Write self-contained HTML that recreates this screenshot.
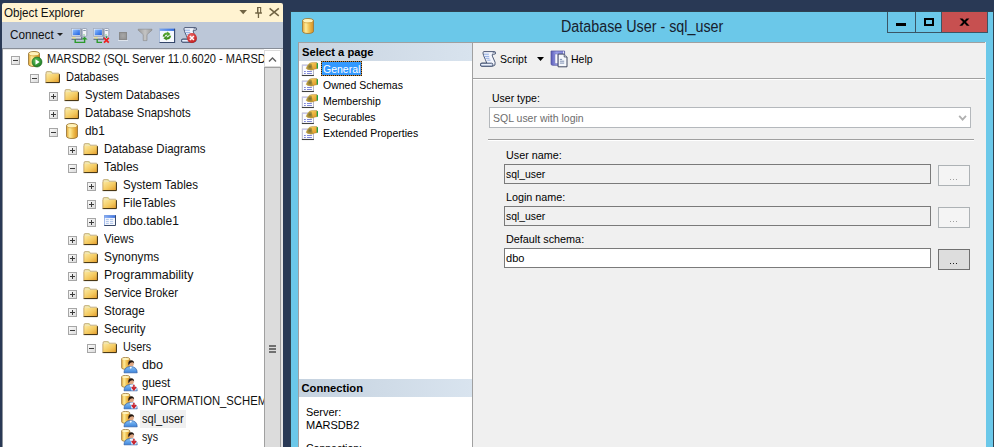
<!DOCTYPE html>
<html><head><meta charset="utf-8">
<style>
html,body{margin:0;padding:0;}
body{width:994px;height:447px;overflow:hidden;position:relative;background:#293955;font-family:"Liberation Sans",sans-serif;}
.a{position:absolute;}
.t{position:absolute;white-space:nowrap;line-height:1;}
.exp{position:absolute;width:7px;height:7px;border:1px solid #a6a6a6;background:linear-gradient(135deg,#fafafa,#dcdcdc);}
.exp:before{content:"";position:absolute;left:1px;top:3px;width:5px;height:1px;background:#3a3a3a;}
.exp.p:after{content:"";position:absolute;left:3px;top:1px;width:1px;height:5px;background:#3a3a3a;}
</style></head><body>
<svg width="0" height="0" style="position:absolute"><defs><linearGradient id="gFold" x1="0" y1="0" x2="1" y2="1">
  <stop offset="0" stop-color="#fbe9a0"/><stop offset="0.55" stop-color="#f4c95e"/><stop offset="1" stop-color="#e29a2a"/>
 </linearGradient><linearGradient id="gCyl" x1="0" y1="0" x2="1" y2="0">
  <stop offset="0" stop-color="#e3a434"/><stop offset="0.3" stop-color="#fdec9a"/><stop offset="0.62" stop-color="#f0c050"/><stop offset="1" stop-color="#d68e22"/>
 </linearGradient><radialGradient id="gGreen" cx="0.4" cy="0.35" r="0.7">
  <stop offset="0" stop-color="#5fc35a"/><stop offset="1" stop-color="#1b7a22"/>
 </radialGradient><linearGradient id="gScreen" x1="0" y1="0" x2="1" y2="1">
  <stop offset="0" stop-color="#8fc0ff"/><stop offset="1" stop-color="#1c5fe0"/>
 </linearGradient><linearGradient id="gBlueShirt" x1="0" y1="0" x2="0" y2="1">
  <stop offset="0" stop-color="#8cc4f6"/><stop offset="1" stop-color="#3c84dc"/>
 </linearGradient><radialGradient id="gRed" cx="0.4" cy="0.35" r="0.7">
  <stop offset="0" stop-color="#f07070"/><stop offset="1" stop-color="#c01818"/>
 </radialGradient><linearGradient id="gTHead" x1="0" y1="0" x2="1" y2="0"><stop offset="0" stop-color="#8ab0f4"/><stop offset="1" stop-color="#3a70e0"/></linearGradient><linearGradient id="gFil" x1="0" y1="0" x2="1" y2="0"><stop offset="0" stop-color="#9a9a9a"/><stop offset="0.5" stop-color="#c4c4c4"/><stop offset="1" stop-color="#9a9a9a"/></linearGradient><linearGradient id="gTitle" x1="0" y1="0" x2="1" y2="0"><stop offset="0" stop-color="#7aa6ee"/><stop offset="1" stop-color="#2f6ae0"/></linearGradient><linearGradient id="gArr" x1="0" y1="0" x2="0" y2="1"><stop offset="0" stop-color="#58a830"/><stop offset="1" stop-color="#3a8a18"/></linearGradient><linearGradient id="gBook" x1="0" y1="0" x2="1" y2="0"><stop offset="0" stop-color="#5a5cb8"/><stop offset="0.4" stop-color="#9a9ee8"/><stop offset="1" stop-color="#7c80d4"/></linearGradient><pattern id="pChk" width="1.6" height="1.6" patternUnits="userSpaceOnUse" patternTransform="rotate(40)"><rect width="1.6" height="1.6" fill="#e8c040"/><rect width="0.8" height="0.8" fill="#5a5a30"/><rect x="0.8" y="0.8" width="0.8" height="0.8" fill="#5a5a30"/></pattern><linearGradient id="gHand" x1="0" y1="0" x2="1" y2="1"><stop offset="0" stop-color="#fde070"/><stop offset="1" stop-color="#e0901c"/></linearGradient></defs></svg>

<div class="a" style="left:2px;top:3px;width:281px;height:19px;background:#fff3d1;border-radius:2px 2px 0 0;"></div>
<div class="a" style="left:2px;top:22px;width:281px;height:26px;background:#bcc7d8;"></div>
<div class="a" style="left:2px;top:48px;width:281px;height:1px;background:#888e98;"></div>
<div class="a" style="left:2px;top:49px;width:1px;height:398px;background:#8e949c;"></div>
<div class="a" style="left:3px;top:49px;width:280px;height:398px;background:#fff;"></div>
<div class="a" style="left:3px;top:49px;width:280px;height:1px;background:#e8e8e8;"></div>
<div class="t" style="left:4.4px;top:6.77px;font-size:12.2px;color:#111;font-weight:normal;transform:scaleX(0.955);transform-origin:0 0;">Object Explorer</div>
<div class="t" style="left:9.7px;top:29.09px;font-size:12.3px;color:#111;font-weight:normal;transform:scaleX(0.955);transform-origin:0 0;">Connect</div>
<svg class="a" style="left:230px;top:4px" width="53" height="18" viewBox="230 4 53 18"><path d="M239.4 10h7.6l-3.8 4.2z" fill="#716444"/><path d="M257 7h4.2v6h-1.1v-5h-1.6v5h-1.5z M255.2 12.3h6.7v1.4h-6.7z M257.8 13.5h1.3v4.5h-1.3z" fill="#716444"/><path d="M269.6 8.3l9.2 7.6M278.8 8.3l-9.2 7.6" stroke="#716444" stroke-width="1.5"/></svg>
<svg class="a" style="left:56.3px;top:32px" width="8" height="5"><path d="M1 1h6l-3 3z" fill="#1e1e1e"/></svg>
<svg class="a" style="left:71px;top:28px" width="17" height="16" viewBox="0 0 17 16">
  <svg width="17" height="16" viewBox="0 0 17 16">
  <rect x="0.5" y="0.5" width="9.5" height="7.8" fill="#eef1f6" stroke="#a4aec0" stroke-width="0.8"/>
  <path d="M10 0.8 V8.3 H0.8" fill="none" stroke="#56627a" stroke-width="0.7"/>
  <rect x="1.6" y="1.5" width="7.3" height="5.6" fill="url(#gScreen)"/>
  <path d="M0.3 8.4 H10.5 L10.8 11.3 H0.3Z" fill="#d4dae4"/>
  <path d="M0.5 11.2 H10.8 V8.6" fill="none" stroke="#3c4860" stroke-width="0.9"/>
  <rect x="1.2" y="9.2" width="3.4" height="1.2" fill="#efe27a"/>
  <rect x="11.2" y="0.5" width="4.6" height="7.8" rx="1" fill="#f2f4f8" stroke="#8a96aa" stroke-width="0.8"/>
  <rect x="12.2" y="2" width="2.6" height="0.9" fill="#7d8ca4"/>
  <rect x="12.5" y="6.4" width="1" height="1" fill="#3ab03a"/>
 </svg>
  <path d="M4.2 11.3 V14.4 H13.6 V10.5" fill="none" stroke="#2b9a2b" stroke-width="1.4"/>
  <path d="M10.3 11.6 L13.6 8.8 L16.6 11.6Z" fill="#2b9a2b"/>
 </svg>
<svg class="a" style="left:93px;top:28px" width="17" height="16" viewBox="0 0 17 16">
  <svg width="17" height="16" viewBox="0 0 17 16">
  <rect x="0.5" y="0.5" width="9.5" height="7.8" fill="#eef1f6" stroke="#a4aec0" stroke-width="0.8"/>
  <path d="M10 0.8 V8.3 H0.8" fill="none" stroke="#56627a" stroke-width="0.7"/>
  <rect x="1.6" y="1.5" width="7.3" height="5.6" fill="url(#gScreen)"/>
  <path d="M0.3 8.4 H10.5 L10.8 11.3 H0.3Z" fill="#d4dae4"/>
  <path d="M0.5 11.2 H10.8 V8.6" fill="none" stroke="#3c4860" stroke-width="0.9"/>
  <rect x="1.2" y="9.2" width="3.4" height="1.2" fill="#efe27a"/>
  <rect x="11.2" y="0.5" width="4.6" height="7.8" rx="1" fill="#f2f4f8" stroke="#8a96aa" stroke-width="0.8"/>
  <rect x="12.2" y="2" width="2.6" height="0.9" fill="#7d8ca4"/>
  <rect x="12.5" y="6.4" width="1" height="1" fill="#3ab03a"/>
 </svg>
  <path d="M4.2 11.3 V14.4 H9" fill="none" stroke="#2b9a2b" stroke-width="1.4"/>
  <path d="M13.5 8.4 V10" stroke="#2b9a2b" stroke-width="1"/>
  <path d="M11 9.8 L15.8 14.6 M15.8 9.8 L11 14.6" stroke="#ee2020" stroke-width="1.8"/>
 </svg>
<div class="a" style="left:119px;top:32px;width:8px;height:8px;background:radial-gradient(circle at 50% 45%,#a8a8a8,#8a8a8a);box-shadow:inset 0 0 0 1px #8a8a8a;"></div>
<div class="a" style="left:118px;top:40px;width:10px;height:1px;background:#dde3ec;"></div>
<svg class="a" style="left:137px;top:28px" width="16" height="16" viewBox="0 0 16 16">
  
  <path d="M1.2 1.2 H15 V2.2 L10 6.6 V12.6 H6.2 V6.6 L1.2 2.2 Z" fill="url(#gFil)" stroke="#888" stroke-width="0.6"/>
 </svg>
<svg class="a" style="left:159px;top:28px" width="17" height="16" viewBox="0 0 17 16">
  
  
  <rect x="0.5" y="0.3" width="15.2" height="14.2" fill="#f6f9fe"/>
  <rect x="0.5" y="0.3" width="15.2" height="2.6" fill="url(#gTitle)"/>
  <path d="M0.5 14.6 V0.3 H15.7" fill="none" stroke="#a0b4d4" stroke-width="0.8"/>
  <path d="M0.5 14.5 H15.6 V0.8" fill="none" stroke="#34466a" stroke-width="1.1"/>
  <path d="M4.6 8.6 Q5.2 5.4 8.6 5.6" fill="none" stroke="url(#gArr)" stroke-width="2"/>
  <path d="M8.2 3.6 L11.4 6 L8.2 8.6Z" fill="#4a9c24"/>
  <path d="M11.2 7.6 Q10.8 10.6 7.4 10.4" fill="none" stroke="url(#gArr)" stroke-width="2"/>
  <path d="M7.8 7.6 L4.4 10.2 L7.8 12.6Z" fill="#3f8f1c"/>
 </svg>
<svg class="a" style="left:181px;top:27px" width="17" height="17" viewBox="0 0 17 17">
  <svg width="16" height="16" viewBox="0 0 16 16">
  <path d="M3.6 0.6 H14 Q15.8 0.6 15.8 1.9 Q15.8 3.2 14 3.2 H12.6 Q11.9 3.6 12.4 5.2 L15.1 11.3 Q15.9 14.9 12.8 15.2 H1.9 Q0.4 15.2 0.4 13.7 Q0.4 12.2 1.9 12.2 H6.8 Q5.6 9 3.6 4.6 Q2.3 1.2 3.6 0.6 Z" fill="#f2f5fc" stroke="#3a4868" stroke-width="0.9"/>
  <path d="M4 3.2h4.9M4.3 5.4h4.9M5.4 7.3h4M7.3 9.2h3.2" stroke="#86a4e0" stroke-width="0.9"/>
  <path d="M1.9 12.2 H11.6 Q12.9 12.2 12.9 13.7 Q12.9 15.2 11.6 15.2 H1.9 Q0.4 15.2 0.4 13.7 Q0.4 12.2 1.9 12.2Z" fill="#d0dbf0" stroke="#3a4868" stroke-width="0.9"/>
  <path d="M2 13.6 H11" stroke="#f4f7ff" stroke-width="0.8"/>
  <path d="M12.5 2 Q13.5 1 14.6 1.6" fill="none" stroke="#3a4868" stroke-width="0.7"/>
 </svg>
  <circle cx="10.9" cy="11" r="4.9" fill="url(#gRed)"/>
  <path d="M8.9 9 L12.9 13 M12.9 9 L8.9 13" stroke="#fff" stroke-width="1.5"/>
 </svg>
<div class="a" style="left:3px;top:49px;width:261px;height:398px;overflow:hidden;">
<div class="exp" style="left:8px;top:7px"></div>
<svg class="a" style="left:25px;top:2px" width="16" height="17" viewBox="0 0 16 17">
  <svg x="0" y="0" width="12" height="16" viewBox="0 0 12 16">
  <path d="M0.5 2.6 A5.5 2.1 0 0 1 11.5 2.6 V13.4 A5.5 2.1 0 0 1 0.5 13.4 Z" fill="url(#gCyl)" stroke="#9c7a3c" stroke-width="0.9"/>
  <ellipse cx="6" cy="2.7" rx="4.9" ry="1.6" fill="#fff3bc"/>
  <path d="M1 3.2 A5 1.8 0 0 0 11 3.2" fill="none" stroke="#c89a40" stroke-width="0.6"/>
 </svg>
  <circle cx="9" cy="11" r="5" fill="url(#gGreen)" stroke="#16631b" stroke-width="0.6"/>
  <path d="M7.5 8.3 L11.6 11 L7.5 13.7 Z" fill="#fff"/>
 </svg>
<div class="t" style="left:44px;top:4.53px;font-size:11.9px;color:#111;font-weight:normal;transform:scaleX(0.93);transform-origin:0 0;">MARSDB2 (SQL Server 11.0.6020 - MARSDB2\sql_user)</div>
<div class="exp" style="left:27px;top:25px"></div>
<svg class="a" style="left:42px;top:22px" width="16" height="13" viewBox="0 0 16 13">
  <path d="M1 2 Q1 0.6 2 0.6 H5.8 Q6.6 0.6 6.8 1.6 L7 2.2 H13.4 Q14 2.2 14 3 V11.5 H1 Z" fill="#f3e6b0" stroke="#b8a070" stroke-width="0.8"/>
  <path d="M5.2 1.1 H6.5" stroke="#c8e070" stroke-width="0.8"/>
  <rect x="1" y="3" width="13.2" height="8.6" fill="url(#gFold)"/>
  <path d="M0.6 11.6 H14.4 V3.2" fill="none" stroke="#3a2c10" stroke-width="1"/>
  <path d="M1 11.5 V3" fill="none" stroke="#caa860" stroke-width="0.7"/>
 </svg>
<div class="t" style="left:63px;top:22.53px;font-size:11.9px;color:#111;font-weight:normal;transform:scaleX(0.929);transform-origin:0 0;">Databases</div>
<div class="exp p" style="left:46px;top:43px"></div>
<svg class="a" style="left:61px;top:40px" width="16" height="13" viewBox="0 0 16 13">
  <path d="M1 2 Q1 0.6 2 0.6 H5.8 Q6.6 0.6 6.8 1.6 L7 2.2 H13.4 Q14 2.2 14 3 V11.5 H1 Z" fill="#f3e6b0" stroke="#b8a070" stroke-width="0.8"/>
  <path d="M5.2 1.1 H6.5" stroke="#c8e070" stroke-width="0.8"/>
  <rect x="1" y="3" width="13.2" height="8.6" fill="url(#gFold)"/>
  <path d="M0.6 11.6 H14.4 V3.2" fill="none" stroke="#3a2c10" stroke-width="1"/>
  <path d="M1 11.5 V3" fill="none" stroke="#caa860" stroke-width="0.7"/>
 </svg>
<div class="t" style="left:82px;top:40.53px;font-size:11.9px;color:#111;font-weight:normal;transform:scaleX(0.948);transform-origin:0 0;">System Databases</div>
<div class="exp p" style="left:46px;top:61px"></div>
<svg class="a" style="left:61px;top:58px" width="16" height="13" viewBox="0 0 16 13">
  <path d="M1 2 Q1 0.6 2 0.6 H5.8 Q6.6 0.6 6.8 1.6 L7 2.2 H13.4 Q14 2.2 14 3 V11.5 H1 Z" fill="#f3e6b0" stroke="#b8a070" stroke-width="0.8"/>
  <path d="M5.2 1.1 H6.5" stroke="#c8e070" stroke-width="0.8"/>
  <rect x="1" y="3" width="13.2" height="8.6" fill="url(#gFold)"/>
  <path d="M0.6 11.6 H14.4 V3.2" fill="none" stroke="#3a2c10" stroke-width="1"/>
  <path d="M1 11.5 V3" fill="none" stroke="#caa860" stroke-width="0.7"/>
 </svg>
<div class="t" style="left:82px;top:58.53px;font-size:11.9px;color:#111;font-weight:normal;transform:scaleX(0.9565);transform-origin:0 0;">Database Snapshots</div>
<div class="exp" style="left:46px;top:79px"></div>
<svg class="a" style="left:63px;top:74px" width="16" height="17" viewBox="0 0 16 17">
  <svg x="0" y="0" width="12" height="16" viewBox="0 0 12 16">
  <path d="M0.5 2.6 A5.5 2.1 0 0 1 11.5 2.6 V13.4 A5.5 2.1 0 0 1 0.5 13.4 Z" fill="url(#gCyl)" stroke="#9c7a3c" stroke-width="0.9"/>
  <ellipse cx="6" cy="2.7" rx="4.9" ry="1.6" fill="#fff3bc"/>
  <path d="M1 3.2 A5 1.8 0 0 0 11 3.2" fill="none" stroke="#c89a40" stroke-width="0.6"/>
 </svg>
 </svg>
<div class="t" style="left:82px;top:76.53px;font-size:11.9px;color:#111;font-weight:normal;transform:scaleX(0.9954);transform-origin:0 0;">db1</div>
<div class="exp p" style="left:65px;top:97px"></div>
<svg class="a" style="left:80px;top:94px" width="16" height="13" viewBox="0 0 16 13">
  <path d="M1 2 Q1 0.6 2 0.6 H5.8 Q6.6 0.6 6.8 1.6 L7 2.2 H13.4 Q14 2.2 14 3 V11.5 H1 Z" fill="#f3e6b0" stroke="#b8a070" stroke-width="0.8"/>
  <path d="M5.2 1.1 H6.5" stroke="#c8e070" stroke-width="0.8"/>
  <rect x="1" y="3" width="13.2" height="8.6" fill="url(#gFold)"/>
  <path d="M0.6 11.6 H14.4 V3.2" fill="none" stroke="#3a2c10" stroke-width="1"/>
  <path d="M1 11.5 V3" fill="none" stroke="#caa860" stroke-width="0.7"/>
 </svg>
<div class="t" style="left:101px;top:94.53px;font-size:11.9px;color:#111;font-weight:normal;transform:scaleX(0.966);transform-origin:0 0;">Database Diagrams</div>
<div class="exp" style="left:65px;top:115px"></div>
<svg class="a" style="left:80px;top:112px" width="16" height="13" viewBox="0 0 16 13">
  <path d="M1 2 Q1 0.6 2 0.6 H5.8 Q6.6 0.6 6.8 1.6 L7 2.2 H13.4 Q14 2.2 14 3 V11.5 H1 Z" fill="#f3e6b0" stroke="#b8a070" stroke-width="0.8"/>
  <path d="M5.2 1.1 H6.5" stroke="#c8e070" stroke-width="0.8"/>
  <rect x="1" y="3" width="13.2" height="8.6" fill="url(#gFold)"/>
  <path d="M0.6 11.6 H14.4 V3.2" fill="none" stroke="#3a2c10" stroke-width="1"/>
  <path d="M1 11.5 V3" fill="none" stroke="#caa860" stroke-width="0.7"/>
 </svg>
<div class="t" style="left:101px;top:112.53px;font-size:11.9px;color:#111;font-weight:normal;transform:scaleX(1.0049);transform-origin:0 0;">Tables</div>
<div class="exp p" style="left:84px;top:133px"></div>
<svg class="a" style="left:99px;top:130px" width="16" height="13" viewBox="0 0 16 13">
  <path d="M1 2 Q1 0.6 2 0.6 H5.8 Q6.6 0.6 6.8 1.6 L7 2.2 H13.4 Q14 2.2 14 3 V11.5 H1 Z" fill="#f3e6b0" stroke="#b8a070" stroke-width="0.8"/>
  <path d="M5.2 1.1 H6.5" stroke="#c8e070" stroke-width="0.8"/>
  <rect x="1" y="3" width="13.2" height="8.6" fill="url(#gFold)"/>
  <path d="M0.6 11.6 H14.4 V3.2" fill="none" stroke="#3a2c10" stroke-width="1"/>
  <path d="M1 11.5 V3" fill="none" stroke="#caa860" stroke-width="0.7"/>
 </svg>
<div class="t" style="left:120px;top:130.53px;font-size:11.9px;color:#111;font-weight:normal;transform:scaleX(0.9717);transform-origin:0 0;">System Tables</div>
<div class="exp p" style="left:84px;top:151px"></div>
<svg class="a" style="left:99px;top:148px" width="16" height="13" viewBox="0 0 16 13">
  <path d="M1 2 Q1 0.6 2 0.6 H5.8 Q6.6 0.6 6.8 1.6 L7 2.2 H13.4 Q14 2.2 14 3 V11.5 H1 Z" fill="#f3e6b0" stroke="#b8a070" stroke-width="0.8"/>
  <path d="M5.2 1.1 H6.5" stroke="#c8e070" stroke-width="0.8"/>
  <rect x="1" y="3" width="13.2" height="8.6" fill="url(#gFold)"/>
  <path d="M0.6 11.6 H14.4 V3.2" fill="none" stroke="#3a2c10" stroke-width="1"/>
  <path d="M1 11.5 V3" fill="none" stroke="#caa860" stroke-width="0.7"/>
 </svg>
<div class="t" style="left:120px;top:148.53px;font-size:11.9px;color:#111;font-weight:normal;transform:scaleX(0.9802);transform-origin:0 0;">FileTables</div>
<div class="exp p" style="left:84px;top:169px"></div>
<svg class="a" style="left:101px;top:166px" width="16" height="16" viewBox="0 0 16 16">
  
  <rect x="0.2" y="0" width="11.8" height="11" fill="#f4f7fd"/>
  <rect x="0.2" y="0" width="11.8" height="2.9" fill="url(#gTHead)"/>
  <path d="M0.5 11 V0.3 H11.8" fill="none" stroke="#7a9ce0" stroke-width="0.7"/>
  <path d="M0.3 10.5 H11.5 V0.4" fill="none" stroke="#3a4a6a" stroke-width="1"/>
  <path d="M1.9 4.4h2.9M6 4.4h3.1M1.9 6.4h2.9M6 6.4h3.1M1.9 8.4h2.9M6 8.4h3.1" stroke="#a4bce6" stroke-width="0.9"/>
 </svg>
<div class="t" style="left:120px;top:166.53px;font-size:11.9px;color:#111;font-weight:normal;transform:scaleX(1.0049);transform-origin:0 0;">dbo.table1</div>
<div class="exp p" style="left:65px;top:187px"></div>
<svg class="a" style="left:80px;top:184px" width="16" height="13" viewBox="0 0 16 13">
  <path d="M1 2 Q1 0.6 2 0.6 H5.8 Q6.6 0.6 6.8 1.6 L7 2.2 H13.4 Q14 2.2 14 3 V11.5 H1 Z" fill="#f3e6b0" stroke="#b8a070" stroke-width="0.8"/>
  <path d="M5.2 1.1 H6.5" stroke="#c8e070" stroke-width="0.8"/>
  <rect x="1" y="3" width="13.2" height="8.6" fill="url(#gFold)"/>
  <path d="M0.6 11.6 H14.4 V3.2" fill="none" stroke="#3a2c10" stroke-width="1"/>
  <path d="M1 11.5 V3" fill="none" stroke="#caa860" stroke-width="0.7"/>
 </svg>
<div class="t" style="left:101px;top:184.53px;font-size:11.9px;color:#111;font-weight:normal;transform:scaleX(0.948);transform-origin:0 0;">Views</div>
<div class="exp p" style="left:65px;top:205px"></div>
<svg class="a" style="left:80px;top:202px" width="16" height="13" viewBox="0 0 16 13">
  <path d="M1 2 Q1 0.6 2 0.6 H5.8 Q6.6 0.6 6.8 1.6 L7 2.2 H13.4 Q14 2.2 14 3 V11.5 H1 Z" fill="#f3e6b0" stroke="#b8a070" stroke-width="0.8"/>
  <path d="M5.2 1.1 H6.5" stroke="#c8e070" stroke-width="0.8"/>
  <rect x="1" y="3" width="13.2" height="8.6" fill="url(#gFold)"/>
  <path d="M0.6 11.6 H14.4 V3.2" fill="none" stroke="#3a2c10" stroke-width="1"/>
  <path d="M1 11.5 V3" fill="none" stroke="#caa860" stroke-width="0.7"/>
 </svg>
<div class="t" style="left:101px;top:202.53px;font-size:11.9px;color:#111;font-weight:normal;transform:scaleX(0.9935);transform-origin:0 0;">Synonyms</div>
<div class="exp p" style="left:65px;top:223px"></div>
<svg class="a" style="left:80px;top:220px" width="16" height="13" viewBox="0 0 16 13">
  <path d="M1 2 Q1 0.6 2 0.6 H5.8 Q6.6 0.6 6.8 1.6 L7 2.2 H13.4 Q14 2.2 14 3 V11.5 H1 Z" fill="#f3e6b0" stroke="#b8a070" stroke-width="0.8"/>
  <path d="M5.2 1.1 H6.5" stroke="#c8e070" stroke-width="0.8"/>
  <rect x="1" y="3" width="13.2" height="8.6" fill="url(#gFold)"/>
  <path d="M0.6 11.6 H14.4 V3.2" fill="none" stroke="#3a2c10" stroke-width="1"/>
  <path d="M1 11.5 V3" fill="none" stroke="#caa860" stroke-width="0.7"/>
 </svg>
<div class="t" style="left:101px;top:220.53px;font-size:11.9px;color:#111;font-weight:normal;transform:scaleX(1.0409);transform-origin:0 0;">Programmability</div>
<div class="exp p" style="left:65px;top:241px"></div>
<svg class="a" style="left:80px;top:238px" width="16" height="13" viewBox="0 0 16 13">
  <path d="M1 2 Q1 0.6 2 0.6 H5.8 Q6.6 0.6 6.8 1.6 L7 2.2 H13.4 Q14 2.2 14 3 V11.5 H1 Z" fill="#f3e6b0" stroke="#b8a070" stroke-width="0.8"/>
  <path d="M5.2 1.1 H6.5" stroke="#c8e070" stroke-width="0.8"/>
  <rect x="1" y="3" width="13.2" height="8.6" fill="url(#gFold)"/>
  <path d="M0.6 11.6 H14.4 V3.2" fill="none" stroke="#3a2c10" stroke-width="1"/>
  <path d="M1 11.5 V3" fill="none" stroke="#caa860" stroke-width="0.7"/>
 </svg>
<div class="t" style="left:101px;top:238.53px;font-size:11.9px;color:#111;font-weight:normal;transform:scaleX(0.948);transform-origin:0 0;">Service Broker</div>
<div class="exp p" style="left:65px;top:259px"></div>
<svg class="a" style="left:80px;top:256px" width="16" height="13" viewBox="0 0 16 13">
  <path d="M1 2 Q1 0.6 2 0.6 H5.8 Q6.6 0.6 6.8 1.6 L7 2.2 H13.4 Q14 2.2 14 3 V11.5 H1 Z" fill="#f3e6b0" stroke="#b8a070" stroke-width="0.8"/>
  <path d="M5.2 1.1 H6.5" stroke="#c8e070" stroke-width="0.8"/>
  <rect x="1" y="3" width="13.2" height="8.6" fill="url(#gFold)"/>
  <path d="M0.6 11.6 H14.4 V3.2" fill="none" stroke="#3a2c10" stroke-width="1"/>
  <path d="M1 11.5 V3" fill="none" stroke="#caa860" stroke-width="0.7"/>
 </svg>
<div class="t" style="left:101px;top:256.53px;font-size:11.9px;color:#111;font-weight:normal;transform:scaleX(0.9774);transform-origin:0 0;">Storage</div>
<div class="exp" style="left:65px;top:277px"></div>
<svg class="a" style="left:80px;top:274px" width="16" height="13" viewBox="0 0 16 13">
  <path d="M1 2 Q1 0.6 2 0.6 H5.8 Q6.6 0.6 6.8 1.6 L7 2.2 H13.4 Q14 2.2 14 3 V11.5 H1 Z" fill="#f3e6b0" stroke="#b8a070" stroke-width="0.8"/>
  <path d="M5.2 1.1 H6.5" stroke="#c8e070" stroke-width="0.8"/>
  <rect x="1" y="3" width="13.2" height="8.6" fill="url(#gFold)"/>
  <path d="M0.6 11.6 H14.4 V3.2" fill="none" stroke="#3a2c10" stroke-width="1"/>
  <path d="M1 11.5 V3" fill="none" stroke="#caa860" stroke-width="0.7"/>
 </svg>
<div class="t" style="left:101px;top:274.53px;font-size:11.9px;color:#111;font-weight:normal;transform:scaleX(0.9641);transform-origin:0 0;">Security</div>
<div class="exp" style="left:84px;top:295px"></div>
<svg class="a" style="left:99px;top:292px" width="16" height="13" viewBox="0 0 16 13">
  <path d="M1 2 Q1 0.6 2 0.6 H5.8 Q6.6 0.6 6.8 1.6 L7 2.2 H13.4 Q14 2.2 14 3 V11.5 H1 Z" fill="#f3e6b0" stroke="#b8a070" stroke-width="0.8"/>
  <path d="M5.2 1.1 H6.5" stroke="#c8e070" stroke-width="0.8"/>
  <rect x="1" y="3" width="13.2" height="8.6" fill="url(#gFold)"/>
  <path d="M0.6 11.6 H14.4 V3.2" fill="none" stroke="#3a2c10" stroke-width="1"/>
  <path d="M1 11.5 V3" fill="none" stroke="#caa860" stroke-width="0.7"/>
 </svg>
<div class="t" style="left:120px;top:292.53px;font-size:11.9px;color:#111;font-weight:normal;transform:scaleX(0.9101);transform-origin:0 0;">Users</div>
<svg class="a" style="left:118px;top:308px" width="18" height="18" viewBox="0 0 18 18">
  <path d="M0.6 1.9 A4.1 1.5 0 0 1 8.8 1.9 V10.8 A4.1 1.5 0 0 1 0.6 10.8 Z" fill="url(#gCyl)" stroke="#9c7a3c" stroke-width="0.8"/>
  <ellipse cx="4.7" cy="2" rx="3.6" ry="1.1" fill="#fff3bc"/>
  <circle cx="10.2" cy="6.8" r="2.6" fill="#e0a884"/>
  <path d="M7.3 7.6 Q6.9 3.4 10.2 3.3 Q13.4 3.4 13.1 6.6 Q12.4 5.3 11.2 5.3 Q9.2 5.4 8.4 7 Q8 8.6 7.3 7.6Z" fill="#22160e"/>
  <path d="M3 15.8 Q3 9.8 9.6 9.5 Q16.2 9.8 16.2 15.8 Z" fill="url(#gBlueShirt)" stroke="#2a5ca8" stroke-width="0.7"/>
  <path d="M8.6 9.7 L9.8 12.2 L11 9.7Z" fill="#fff"/>
 </svg>
<div class="t" style="left:139px;top:310.53px;font-size:11.9px;color:#111;font-weight:normal;transform:scaleX(1.0618);transform-origin:0 0;">dbo</div>
<svg class="a" style="left:118px;top:326px" width="18" height="18" viewBox="0 0 18 18">
  <svg width="18" height="18" viewBox="0 0 18 18">
  <path d="M0.6 1.9 A4.1 1.5 0 0 1 8.8 1.9 V10.8 A4.1 1.5 0 0 1 0.6 10.8 Z" fill="url(#gCyl)" stroke="#9c7a3c" stroke-width="0.8"/>
  <ellipse cx="4.7" cy="2" rx="3.6" ry="1.1" fill="#fff3bc"/>
  <circle cx="10.2" cy="6.8" r="2.6" fill="#e0a884"/>
  <path d="M7.3 7.6 Q6.9 3.4 10.2 3.3 Q13.4 3.4 13.1 6.6 Q12.4 5.3 11.2 5.3 Q9.2 5.4 8.4 7 Q8 8.6 7.3 7.6Z" fill="#22160e"/>
  <path d="M3 15.8 Q3 9.8 9.6 9.5 Q16.2 9.8 16.2 15.8 Z" fill="url(#gBlueShirt)" stroke="#2a5ca8" stroke-width="0.7"/>
  <path d="M8.6 9.7 L9.8 12.2 L11 9.7Z" fill="#fff"/>
 </svg>
  <rect x="10.2" y="9.6" width="5.4" height="5.8" fill="#fff" opacity="0.85"/>
  <path d="M12.9 9.8 V13.2 M10.8 12 L12.9 14.8 L15 12" fill="none" stroke="#c8202a" stroke-width="1.5"/>
 </svg>
<div class="t" style="left:139px;top:328.53px;font-size:11.9px;color:#111;font-weight:normal;transform:scaleX(0.9717);transform-origin:0 0;">guest</div>
<svg class="a" style="left:118px;top:344px" width="18" height="18" viewBox="0 0 18 18">
  <svg width="18" height="18" viewBox="0 0 18 18">
  <path d="M0.6 1.9 A4.1 1.5 0 0 1 8.8 1.9 V10.8 A4.1 1.5 0 0 1 0.6 10.8 Z" fill="url(#gCyl)" stroke="#9c7a3c" stroke-width="0.8"/>
  <ellipse cx="4.7" cy="2" rx="3.6" ry="1.1" fill="#fff3bc"/>
  <circle cx="10.2" cy="6.8" r="2.6" fill="#e0a884"/>
  <path d="M7.3 7.6 Q6.9 3.4 10.2 3.3 Q13.4 3.4 13.1 6.6 Q12.4 5.3 11.2 5.3 Q9.2 5.4 8.4 7 Q8 8.6 7.3 7.6Z" fill="#22160e"/>
  <path d="M3 15.8 Q3 9.8 9.6 9.5 Q16.2 9.8 16.2 15.8 Z" fill="url(#gBlueShirt)" stroke="#2a5ca8" stroke-width="0.7"/>
  <path d="M8.6 9.7 L9.8 12.2 L11 9.7Z" fill="#fff"/>
 </svg>
  <rect x="10.2" y="9.6" width="5.4" height="5.8" fill="#fff" opacity="0.85"/>
  <path d="M12.9 9.8 V13.2 M10.8 12 L12.9 14.8 L15 12" fill="none" stroke="#c8202a" stroke-width="1.5"/>
 </svg>
<div class="t" style="left:139px;top:346.53px;font-size:11.9px;color:#111;font-weight:normal;transform:scaleX(0.948);transform-origin:0 0;">INFORMATION_SCHEMA</div>
<svg class="a" style="left:118px;top:362px" width="18" height="18" viewBox="0 0 18 18">
  <path d="M0.6 1.9 A4.1 1.5 0 0 1 8.8 1.9 V10.8 A4.1 1.5 0 0 1 0.6 10.8 Z" fill="url(#gCyl)" stroke="#9c7a3c" stroke-width="0.8"/>
  <ellipse cx="4.7" cy="2" rx="3.6" ry="1.1" fill="#fff3bc"/>
  <circle cx="10.2" cy="6.8" r="2.6" fill="#e0a884"/>
  <path d="M7.3 7.6 Q6.9 3.4 10.2 3.3 Q13.4 3.4 13.1 6.6 Q12.4 5.3 11.2 5.3 Q9.2 5.4 8.4 7 Q8 8.6 7.3 7.6Z" fill="#22160e"/>
  <path d="M3 15.8 Q3 9.8 9.6 9.5 Q16.2 9.8 16.2 15.8 Z" fill="url(#gBlueShirt)" stroke="#2a5ca8" stroke-width="0.7"/>
  <path d="M8.6 9.7 L9.8 12.2 L11 9.7Z" fill="#fff"/>
 </svg>
<div class="a" style="left:137px;top:361px;width:46px;height:18px;background:#f0f0f0;"></div>
<div class="t" style="left:139px;top:364.53px;font-size:11.9px;color:#111;font-weight:normal;transform:scaleX(0.9281);transform-origin:0 0;">sql_user</div>
<svg class="a" style="left:118px;top:380px" width="18" height="18" viewBox="0 0 18 18">
  <svg width="18" height="18" viewBox="0 0 18 18">
  <path d="M0.6 1.9 A4.1 1.5 0 0 1 8.8 1.9 V10.8 A4.1 1.5 0 0 1 0.6 10.8 Z" fill="url(#gCyl)" stroke="#9c7a3c" stroke-width="0.8"/>
  <ellipse cx="4.7" cy="2" rx="3.6" ry="1.1" fill="#fff3bc"/>
  <circle cx="10.2" cy="6.8" r="2.6" fill="#e0a884"/>
  <path d="M7.3 7.6 Q6.9 3.4 10.2 3.3 Q13.4 3.4 13.1 6.6 Q12.4 5.3 11.2 5.3 Q9.2 5.4 8.4 7 Q8 8.6 7.3 7.6Z" fill="#22160e"/>
  <path d="M3 15.8 Q3 9.8 9.6 9.5 Q16.2 9.8 16.2 15.8 Z" fill="url(#gBlueShirt)" stroke="#2a5ca8" stroke-width="0.7"/>
  <path d="M8.6 9.7 L9.8 12.2 L11 9.7Z" fill="#fff"/>
 </svg>
  <rect x="10.2" y="9.6" width="5.4" height="5.8" fill="#fff" opacity="0.85"/>
  <path d="M12.9 9.8 V13.2 M10.8 12 L12.9 14.8 L15 12" fill="none" stroke="#c8202a" stroke-width="1.5"/>
 </svg>
<div class="t" style="left:139px;top:382.53px;font-size:11.9px;color:#111;font-weight:normal;transform:scaleX(0.9006);transform-origin:0 0;">sys</div>
</div>
<div class="a" style="left:264px;top:49px;width:19px;height:398px;background:#fff;"></div>
<div class="a" style="left:264px;top:50px;width:15px;height:15px;border:1px solid #dadada;background:#fff;"></div>
<svg class="a" style="left:264px;top:50px" width="17" height="17"><path d="M5 11.5l3.5-3.5 3.5 3.5" fill="none" stroke="#606060" stroke-width="1.4"/></svg>
<div class="a" style="left:264px;top:67px;width:15px;height:380px;border:1px solid #a0a0a0;border-bottom:none;background:#dcdcdc;"></div>
<div class="a" style="left:269px;top:345px;width:7px;height:2px;background:#707070;"></div>
<div class="a" style="left:269px;top:348px;width:7px;height:2px;background:#707070;"></div>
<div class="a" style="left:269px;top:351px;width:7px;height:2px;background:#707070;"></div>
<div class="a" style="left:281px;top:49px;width:2px;height:398px;background:#e4e4e4;"></div>
<div class="a" style="left:290px;top:11px;width:704px;height:436px;background:#2e4250;"></div>
<div class="a" style="left:291px;top:12px;width:702px;height:435px;background:#6bc8e9;"></div>
<svg class="a" style="left:301px;top:17px" width="15" height="18" viewBox="0 0 15 18">
  <svg x="1" y="1" width="12" height="16" viewBox="0 0 12 16">
  <path d="M0.5 2.6 A5.5 2.1 0 0 1 11.5 2.6 V13.4 A5.5 2.1 0 0 1 0.5 13.4 Z" fill="url(#gCyl)" stroke="#9c7a3c" stroke-width="0.9"/>
  <ellipse cx="6" cy="2.7" rx="4.9" ry="1.6" fill="#fff3bc"/>
  <path d="M1 3.2 A5 1.8 0 0 0 11 3.2" fill="none" stroke="#c89a40" stroke-width="0.6"/>
 </svg>
 </svg>
<div class="t" style="left:561px;top:19.09px;font-size:15.6px;color:#17212e;font-weight:normal;transform:scaleX(0.918);transform-origin:0 0;">Database User - sql_user</div>
<div class="a" style="left:887px;top:12px;width:27px;height:20px;border:1px solid #3a5565;border-top:none;background:#6bc8e9;"></div>
<div class="a" style="left:916px;top:12px;width:25px;height:20px;border:1px solid #3a5565;border-left:none;border-top:none;background:#6bc8e9;"></div>
<div class="a" style="left:942px;top:12px;width:45px;height:20px;border:1px solid #3a5565;border-left:none;border-top:none;background:#c75050;"></div>
<div class="a" style="left:896px;top:23px;width:10px;height:3px;background:#000;"></div>
<div class="a" style="left:924px;top:18px;width:6px;height:4px;border:2px solid #000;"></div>
<svg class="a" style="left:958px;top:16px" width="14" height="12"><path d="M1.6 2.4h2.9l2 2.1 2-2.1h2.9l-3.4 3.5 3.6 3.8h-2.9l-2.2-2.4-2.2 2.4h-2.9l3.6-3.8z" fill="#000"/></svg>
<div class="a" style="left:298px;top:42px;width:688px;height:405px;background:#f0f0f0;"></div>
<div class="a" style="left:298px;top:42px;width:174px;height:405px;background:#fff;border-left:1px solid #a0a0a0;border-top:1px solid #a0a0a0;box-sizing:border-box;"></div>
<div class="a" style="left:299px;top:43px;width:173px;height:18px;background:linear-gradient(90deg,#c9d4e0,#d8e3ee);"></div>
<div class="t" style="left:302px;top:46.52px;font-size:11.2px;color:#000;font-weight:bold;">Select a page</div>
<svg class="a" style="left:301px;top:61px" width="18" height="16" viewBox="0 0 18 16">
  
  
  <rect x="1.2" y="4" width="11.4" height="10.4" fill="#fbfcff" stroke="#9a9ab0" stroke-width="0.7"/>
  <rect x="1.2" y="4" width="11.4" height="0.9" fill="#c8c8f0"/>
  <path d="M0.9 14.5 H12.9" stroke="#404040" stroke-width="1.1"/>
  <path d="M3 10.5h1.8M6 10.5h4.9M3 12.5h1.8M6 12.5h4.9" stroke="#8088d8" stroke-width="1"/>
  <path d="M5.2 7.4 Q6 4.5 8.5 2.2 Q10 1.3 12.5 1.4 L15.9 1.5 V7.7 Q13.5 8 11 9 Q9.5 9.4 8.8 8.7 Q6.5 8.8 5.2 7.4Z" fill="url(#gHand)" stroke="#a07a30" stroke-width="0.4"/>
  <path d="M5.5 7.3 Q6.3 4.6 8.6 2.4 L10.6 2.7 Q11.3 5.5 11.8 8.7 Q10.2 9.4 8.8 8.7 Q6.6 8.7 5.5 7.3 Z" fill="url(#pChk)" opacity="0.85"/>
  <rect x="15.7" y="2" width="1.3" height="5.8" rx="0.5" fill="#22a040"/>
 </svg>
<div class="a" style="left:321px;top:61px;width:41px;height:15px;background:#3399ff;"></div>
<div class="a" style="left:321px;top:61px;width:39px;height:13px;border:1px solid #c88a3a;"></div>
<div class="a" style="left:321px;top:61px;width:39px;height:13px;border:1px dotted #1a1a1a;"></div>
<div class="t" style="left:323px;top:64.01px;font-size:11.8px;color:#fff;font-weight:normal;transform:scaleX(0.89);transform-origin:0 0;">General</div>
<svg class="a" style="left:301px;top:77px" width="18" height="16" viewBox="0 0 18 16">
  
  
  <rect x="1.2" y="4" width="11.4" height="10.4" fill="#fbfcff" stroke="#9a9ab0" stroke-width="0.7"/>
  <rect x="1.2" y="4" width="11.4" height="0.9" fill="#c8c8f0"/>
  <path d="M0.9 14.5 H12.9" stroke="#404040" stroke-width="1.1"/>
  <path d="M3 10.5h1.8M6 10.5h4.9M3 12.5h1.8M6 12.5h4.9" stroke="#8088d8" stroke-width="1"/>
  <path d="M5.2 7.4 Q6 4.5 8.5 2.2 Q10 1.3 12.5 1.4 L15.9 1.5 V7.7 Q13.5 8 11 9 Q9.5 9.4 8.8 8.7 Q6.5 8.8 5.2 7.4Z" fill="url(#gHand)" stroke="#a07a30" stroke-width="0.4"/>
  <path d="M5.5 7.3 Q6.3 4.6 8.6 2.4 L10.6 2.7 Q11.3 5.5 11.8 8.7 Q10.2 9.4 8.8 8.7 Q6.6 8.7 5.5 7.3 Z" fill="url(#pChk)" opacity="0.85"/>
  <rect x="15.7" y="2" width="1.3" height="5.8" rx="0.5" fill="#22a040"/>
 </svg>
<div class="t" style="left:323px;top:80.01px;font-size:11.8px;color:#000;font-weight:normal;transform:scaleX(0.89);transform-origin:0 0;">Owned Schemas</div>
<svg class="a" style="left:301px;top:93px" width="18" height="16" viewBox="0 0 18 16">
  
  
  <rect x="1.2" y="4" width="11.4" height="10.4" fill="#fbfcff" stroke="#9a9ab0" stroke-width="0.7"/>
  <rect x="1.2" y="4" width="11.4" height="0.9" fill="#c8c8f0"/>
  <path d="M0.9 14.5 H12.9" stroke="#404040" stroke-width="1.1"/>
  <path d="M3 10.5h1.8M6 10.5h4.9M3 12.5h1.8M6 12.5h4.9" stroke="#8088d8" stroke-width="1"/>
  <path d="M5.2 7.4 Q6 4.5 8.5 2.2 Q10 1.3 12.5 1.4 L15.9 1.5 V7.7 Q13.5 8 11 9 Q9.5 9.4 8.8 8.7 Q6.5 8.8 5.2 7.4Z" fill="url(#gHand)" stroke="#a07a30" stroke-width="0.4"/>
  <path d="M5.5 7.3 Q6.3 4.6 8.6 2.4 L10.6 2.7 Q11.3 5.5 11.8 8.7 Q10.2 9.4 8.8 8.7 Q6.6 8.7 5.5 7.3 Z" fill="url(#pChk)" opacity="0.85"/>
  <rect x="15.7" y="2" width="1.3" height="5.8" rx="0.5" fill="#22a040"/>
 </svg>
<div class="t" style="left:323px;top:96.01px;font-size:11.8px;color:#000;font-weight:normal;transform:scaleX(0.89);transform-origin:0 0;">Membership</div>
<svg class="a" style="left:301px;top:109px" width="18" height="16" viewBox="0 0 18 16">
  
  
  <rect x="1.2" y="4" width="11.4" height="10.4" fill="#fbfcff" stroke="#9a9ab0" stroke-width="0.7"/>
  <rect x="1.2" y="4" width="11.4" height="0.9" fill="#c8c8f0"/>
  <path d="M0.9 14.5 H12.9" stroke="#404040" stroke-width="1.1"/>
  <path d="M3 10.5h1.8M6 10.5h4.9M3 12.5h1.8M6 12.5h4.9" stroke="#8088d8" stroke-width="1"/>
  <path d="M5.2 7.4 Q6 4.5 8.5 2.2 Q10 1.3 12.5 1.4 L15.9 1.5 V7.7 Q13.5 8 11 9 Q9.5 9.4 8.8 8.7 Q6.5 8.8 5.2 7.4Z" fill="url(#gHand)" stroke="#a07a30" stroke-width="0.4"/>
  <path d="M5.5 7.3 Q6.3 4.6 8.6 2.4 L10.6 2.7 Q11.3 5.5 11.8 8.7 Q10.2 9.4 8.8 8.7 Q6.6 8.7 5.5 7.3 Z" fill="url(#pChk)" opacity="0.85"/>
  <rect x="15.7" y="2" width="1.3" height="5.8" rx="0.5" fill="#22a040"/>
 </svg>
<div class="t" style="left:323px;top:112.01px;font-size:11.8px;color:#000;font-weight:normal;transform:scaleX(0.89);transform-origin:0 0;">Securables</div>
<svg class="a" style="left:301px;top:125px" width="18" height="16" viewBox="0 0 18 16">
  
  
  <rect x="1.2" y="4" width="11.4" height="10.4" fill="#fbfcff" stroke="#9a9ab0" stroke-width="0.7"/>
  <rect x="1.2" y="4" width="11.4" height="0.9" fill="#c8c8f0"/>
  <path d="M0.9 14.5 H12.9" stroke="#404040" stroke-width="1.1"/>
  <path d="M3 10.5h1.8M6 10.5h4.9M3 12.5h1.8M6 12.5h4.9" stroke="#8088d8" stroke-width="1"/>
  <path d="M5.2 7.4 Q6 4.5 8.5 2.2 Q10 1.3 12.5 1.4 L15.9 1.5 V7.7 Q13.5 8 11 9 Q9.5 9.4 8.8 8.7 Q6.5 8.8 5.2 7.4Z" fill="url(#gHand)" stroke="#a07a30" stroke-width="0.4"/>
  <path d="M5.5 7.3 Q6.3 4.6 8.6 2.4 L10.6 2.7 Q11.3 5.5 11.8 8.7 Q10.2 9.4 8.8 8.7 Q6.6 8.7 5.5 7.3 Z" fill="url(#pChk)" opacity="0.85"/>
  <rect x="15.7" y="2" width="1.3" height="5.8" rx="0.5" fill="#22a040"/>
 </svg>
<div class="t" style="left:323px;top:128.01px;font-size:11.8px;color:#000;font-weight:normal;transform:scaleX(0.89);transform-origin:0 0;">Extended Properties</div>
<div class="a" style="left:299px;top:379px;width:173px;height:18px;background:linear-gradient(90deg,#c5d2df,#d9e4ef);"></div>
<div class="t" style="left:301.5px;top:382.52px;font-size:11.2px;color:#000;font-weight:bold;">Connection</div>
<div class="t" style="left:306.4px;top:407.01px;font-size:11.8px;color:#000;font-weight:normal;transform:scaleX(0.9256000000000001);transform-origin:0 0;">Server:</div>
<div class="t" style="left:306.4px;top:420.01px;font-size:11.8px;color:#000;font-weight:normal;transform:scaleX(0.9345000000000001);transform-origin:0 0;">MARSDB2</div>
<div class="t" style="left:306.4px;top:443.01px;font-size:11.8px;color:#000;font-weight:normal;transform:scaleX(0.89);transform-origin:0 0;">Connection:</div>
<div class="a" style="left:472px;top:42px;width:1px;height:405px;background:#a0a0a0;"></div>
<div class="a" style="left:473px;top:42px;width:512px;height:1px;background:#a0a0a0;"></div>
<svg class="a" style="left:479px;top:50px" width="18" height="18" viewBox="0 0 18 18">
  <svg x="1" y="1" width="16" height="16" viewBox="0 0 16 16">
  <path d="M3.6 0.6 H14 Q15.8 0.6 15.8 1.9 Q15.8 3.2 14 3.2 H12.6 Q11.9 3.6 12.4 5.2 L15.1 11.3 Q15.9 14.9 12.8 15.2 H1.9 Q0.4 15.2 0.4 13.7 Q0.4 12.2 1.9 12.2 H6.8 Q5.6 9 3.6 4.6 Q2.3 1.2 3.6 0.6 Z" fill="#f2f5fc" stroke="#3a4868" stroke-width="0.9"/>
  <path d="M4 3.2h4.9M4.3 5.4h4.9M5.4 7.3h4M7.3 9.2h3.2" stroke="#86a4e0" stroke-width="0.9"/>
  <path d="M1.9 12.2 H11.6 Q12.9 12.2 12.9 13.7 Q12.9 15.2 11.6 15.2 H1.9 Q0.4 15.2 0.4 13.7 Q0.4 12.2 1.9 12.2Z" fill="#d0dbf0" stroke="#3a4868" stroke-width="0.9"/>
  <path d="M2 13.6 H11" stroke="#f4f7ff" stroke-width="0.8"/>
  <path d="M12.5 2 Q13.5 1 14.6 1.6" fill="none" stroke="#3a4868" stroke-width="0.7"/>
 </svg>
 </svg>
<div class="t" style="left:500px;top:54.01px;font-size:11.8px;color:#000;font-weight:normal;transform:scaleX(0.89);transform-origin:0 0;">Script</div>
<svg class="a" style="left:536px;top:56px" width="9" height="6"><path d="M1 1h7l-3.5 4z" fill="#000"/></svg>
<svg class="a" style="left:550px;top:50px" width="18" height="18" viewBox="0 0 18 18">
  
  <path d="M1 1 H14.6 V15.3 H2.6 Q1 15.3 1 13.8 Z" fill="url(#gBook)" stroke="#50529a" stroke-width="0.7"/>
  <rect x="13" y="1.4" width="0.9" height="5" fill="#f4f4ff"/>
  <path d="M5 4 H8 V13.6 H5 Z" fill="#fafaff" stroke="#6a6cb0" stroke-width="0.5"/>
  <path d="M8.1 4.1 H14.2 L17 7 V16.8 H8.1 Z" fill="#f6f8fc" stroke="#2e3650" stroke-width="0.9"/>
  <path d="M14.2 4.1 V7 H17" fill="#d8deea" stroke="#2e3650" stroke-width="0.7"/>
  <path d="M9.9 9.4h2.2M9.9 11.2h4.3M9.9 13.1h4.3" stroke="#7284aa" stroke-width="0.9"/>
 </svg>
<div class="t" style="left:571px;top:54.01px;font-size:11.8px;color:#000;font-weight:normal;transform:scaleX(0.89);transform-origin:0 0;">Help</div>
<div class="a" style="left:473px;top:78px;width:512px;height:1px;background:#a0a0a0;"></div>
<div class="a" style="left:473px;top:79px;width:512px;height:1px;background:#fff;"></div>
<div class="t" style="left:492.2px;top:93.01px;font-size:11.8px;color:#000;font-weight:normal;transform:scaleX(0.89);transform-origin:0 0;">User type:</div>
<div class="a" style="left:489px;top:107px;width:480px;height:19px;border:1px solid #b4b8bc;background:#fff;"></div>
<div class="t" style="left:492.6px;top:113.01px;font-size:11.8px;color:#6d6d6d;font-weight:normal;transform:scaleX(0.89);transform-origin:0 0;">SQL user with login</div>
<svg class="a" style="left:955px;top:112px" width="14" height="12"><path d="M4.2 3.8l3.4 3.8 3.4-3.8" fill="none" stroke="#b0b0b0" stroke-width="1.8"/></svg>
<div class="a" style="left:488px;top:139px;width:486px;height:1px;background:#a0a0a0;"></div>
<div class="a" style="left:488px;top:140px;width:486px;height:1px;background:#fff;"></div>
<div class="t" style="left:506.3px;top:150.01px;font-size:11.8px;color:#000;font-weight:normal;transform:scaleX(0.9122499999999999);transform-origin:0 0;">User name:</div>
<div class="a" style="left:504px;top:164px;width:425px;height:18px;border:1px solid #7a7a7a;background:#f0f0f0;"></div>
<div class="t" style="left:506.3px;top:169.01px;font-size:11.8px;color:#000;font-weight:normal;transform:scaleX(0.8811);transform-origin:0 0;">sql_user</div>
<div class="a" style="left:938px;top:165px;width:30px;height:19px;border:1px solid #adb2b5;background:#f4f4f4;"></div>
<div class="a" style="left:950px;top:179px;width:1px;height:1px;background:#a0a0a0;"></div>
<div class="a" style="left:953px;top:179px;width:1px;height:1px;background:#a0a0a0;"></div>
<div class="a" style="left:956px;top:179px;width:1px;height:1px;background:#a0a0a0;"></div>
<div class="t" style="left:506.3px;top:192.01px;font-size:11.8px;color:#000;font-weight:normal;transform:scaleX(0.9122499999999999);transform-origin:0 0;">Login name:</div>
<div class="a" style="left:504px;top:206px;width:425px;height:18px;border:1px solid #7a7a7a;background:#f0f0f0;"></div>
<div class="t" style="left:506.3px;top:211.01px;font-size:11.8px;color:#000;font-weight:normal;transform:scaleX(0.8811);transform-origin:0 0;">sql_user</div>
<div class="a" style="left:938px;top:207px;width:30px;height:19px;border:1px solid #adb2b5;background:#f4f4f4;"></div>
<div class="a" style="left:950px;top:221px;width:1px;height:1px;background:#a0a0a0;"></div>
<div class="a" style="left:953px;top:221px;width:1px;height:1px;background:#a0a0a0;"></div>
<div class="a" style="left:956px;top:221px;width:1px;height:1px;background:#a0a0a0;"></div>
<div class="t" style="left:506.3px;top:234.01px;font-size:11.8px;color:#000;font-weight:normal;transform:scaleX(0.9167000000000001);transform-origin:0 0;">Default schema:</div>
<div class="a" style="left:504px;top:248px;width:425px;height:18px;border:1px solid #7a7a7a;background:#fff;"></div>
<div class="t" style="left:506.3px;top:253.01px;font-size:11.8px;color:#000;font-weight:normal;transform:scaleX(0.9345000000000001);transform-origin:0 0;">dbo</div>
<div class="a" style="left:938px;top:249px;width:30px;height:19px;border:1px solid #707070;background:#dddddd;"></div>
<div class="a" style="left:950px;top:263px;width:1px;height:1px;background:#202020;"></div>
<div class="a" style="left:953px;top:263px;width:1px;height:1px;background:#202020;"></div>
<div class="a" style="left:956px;top:263px;width:1px;height:1px;background:#202020;"></div>
</body></html>
